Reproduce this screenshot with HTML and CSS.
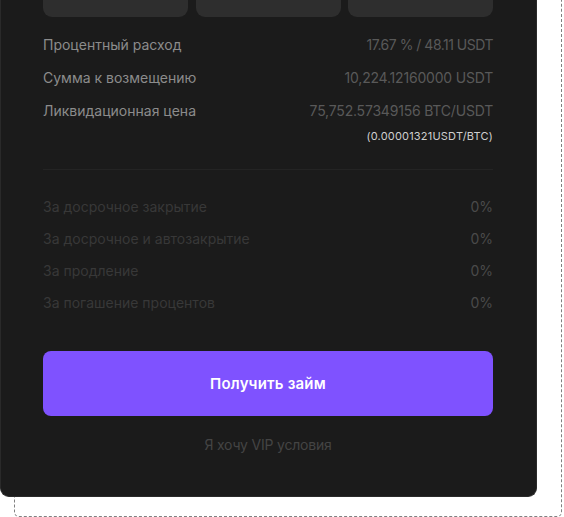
FILE: index.html
```html
<!DOCTYPE html>
<html lang="ru">
<head>
<meta charset="utf-8">
<link rel="stylesheet" href="styles.css">
</head>
<body>
<div class="stage">
  <div class="ghost"></div>
  <div class="card">
    <div class="tiles">
      <div class="tile"><span>7 дней</span></div>
      <div class="tile"><span>30 дней</span></div>
      <div class="tile"><span>90 дней</span></div>
    </div>
    <div class="info">
      <div class="row"><span class="label">Процентный расход</span><span class="value tight">17.67 % / 48.11 USDT</span></div>
      <div class="row"><span class="label">Сумма к возмещению</span><span class="value">10,224.12160000 USDT</span></div>
      <div class="row top">
        <span class="label">Ликвидационная цена</span>
        <span class="values">
          <span class="value">75,752.57349156 BTC/USDT</span>
          <span class="sub">(0.00001321USDT/BTC)</span>
        </span>
      </div>
    </div>
    <div class="divider"></div>
    <div class="fees">
      <div class="row fee"><span>За досрочное закрытие</span><span class="pct">0%</span></div>
      <div class="row fee"><span>За досрочное и автозакрытие</span><span class="pct">0%</span></div>
      <div class="row fee"><span>За продление</span><span class="pct">0%</span></div>
      <div class="row fee"><span>За погашение процентов</span><span class="pct">0%</span></div>
    </div>
    <button class="cta">Получить займ</button>
    <div class="vip">Я хочу VIP условия</div>
  </div>
</div>
</body>
</html>
```

FILE: styles.css
```css
html, body {
  margin: 0;
  padding: 0;
  background: #ffffff;
}
body {
  font-family: Inter, "Noto Sans", "Liberation Sans", sans-serif;
}
.stage {
  position: relative;
  width: 537px;
  margin-top: -40px;
  padding-bottom: 20px;
}
.ghost {
  position: absolute;
  left: 14px;
  top: 19px;
  width: 548px;
  bottom: 0;
  border: 1px dashed #808080;
  border-radius: 5px;
  box-sizing: border-box;
}
.card {
  position: relative;
  background: #1b1b1b;
  border: 1px solid #2a2a2a;
  border-top: none;
  border-radius: 0 0 9px 9px;
  padding: 0 43px 41px 42px;
  box-sizing: border-box;
  width: 537px;
}
.tiles {
  display: grid;
  grid-template-columns: repeat(3, 1fr);
  gap: 7.5px;
}
.tile {
  height: 57px;
  background: #2e2e2e;
  border-radius: 0 0 9px 9px;
  display: flex;
  justify-content: center;
  color: #8a8a8a;
  font-size: 14px;
}
.tile span { line-height: 20px; }
.info {
  margin-top: 18px;
  display: flex;
  flex-direction: column;
  gap: 13px;
}
.row {
  display: flex;
  justify-content: space-between;
  align-items: center;
  font-size: 14px;
  line-height: 20px;
}
.row.top { align-items: flex-start; }
.label { color: #8c8c8c; }
.value { color: #595959; letter-spacing: -0.2px; }
.value.tight { letter-spacing: -0.5px; }
.values {
  display: flex;
  flex-direction: column;
  align-items: flex-end;
}
.sub {
  margin-top: 8px;
  font-size: 11px;
  line-height: 14px;
  color: #cfcfcf;
  letter-spacing: 0.2px;
}
.divider {
  margin-top: 26px;
  height: 1px;
  background: #242424;
}
.fees {
  margin-top: 27px;
  display: flex;
  flex-direction: column;
  gap: 12px;
}
.fee { color: #383838; }
.fee .pct { color: #4a4a4a; }
.cta {
  display: block;
  width: 100%;
  margin-top: 38px;
  height: 65px;
  border: none;
  border-radius: 8px;
  background: #7f52ff;
  color: #ffffff;
  font-family: inherit;
  font-size: 15px;
  font-weight: 600;
  letter-spacing: 0.2px;
}
.vip {
  margin-top: 19px;
  text-align: center;
  font-size: 14px;
  line-height: 20px;
  color: #444444;
  letter-spacing: -0.2px;
}
```
